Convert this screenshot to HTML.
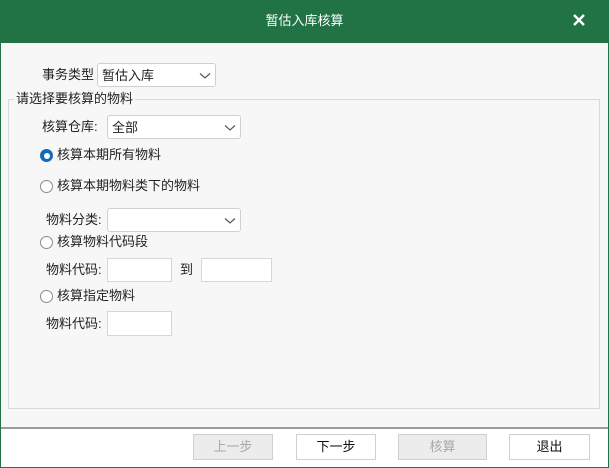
<!DOCTYPE html>
<html><head><meta charset="utf-8"><style>
*{margin:0;padding:0;box-sizing:border-box}
body{width:609px;height:468px;overflow:hidden;font-family:"Liberation Sans","Noto Sans CJK SC",sans-serif;font-size:13px;color:#222;background:#f7f7f7;position:relative}
.win{position:absolute;left:0;top:0;width:609px;height:468px;border:1px solid #217346;background:#f7f7f7}
.title{position:absolute;left:0;top:0;width:609px;height:43px;background:#217346;color:#fff;text-align:center;line-height:41px;font-size:13px}
.x{position:absolute;left:571px;top:12px;width:16px;height:16px}
.a{position:absolute;white-space:nowrap;line-height:16px}
.sel,.inp{position:absolute;background:#fff;border:1px solid #cfcfcf;border-radius:3px}
.inp{border-radius:0;border-color:#d6d6d6}
.sel span{position:absolute;left:4px;top:4px;line-height:16px}
.sel svg{position:absolute;right:4px;top:8px}
.grp{position:absolute;left:8px;top:99px;width:592px;height:310px;border:1px solid #d9d9d9}
.gl{position:absolute;left:14px;top:91px;background:#f7f7f7;padding:0 2px;line-height:16px}
.r{position:absolute;width:13px;height:13px;border-radius:50%;border:1px solid #8a8a8a;background:#fff}
.r.on{border:none;background:#0f6cbd}
.r.on::after{content:"";position:absolute;left:3.5px;top:3.5px;width:6px;height:6px;border-radius:50%;background:#fff}
.bot{position:absolute;left:1px;top:427px;width:607px;height:40px;background:#fff;border-top:2px solid #9a9a9a}
.btn{position:absolute;top:434px;height:26px;border:1px solid #d0d0d0;background:#fff;text-align:center;line-height:24px;color:#111}
.btn.dis{background:#ececec;color:#a8a8a8}
</style></head><body>
<div class="win"></div>
<div class="title">暂估入库核算</div>
<svg class="x" viewBox="0 0 16 16"><path d="M3 3L13 13M13 3L3 13" stroke="#fff" stroke-width="2.4"/></svg>

<div class="a" style="left:42px;top:67px">事务类型</div>
<div class="sel" style="left:97px;top:63px;width:119px;height:24px"><span>暂估入库</span><svg width="12" height="8" viewBox="0 0 12 8"><path d="M1 1.5L6 6L11 1.5" stroke="#555" fill="none" stroke-width="1.2"/></svg></div>

<div class="grp"></div>
<div class="gl">请选择要核算的物料</div>

<div class="a" style="left:42px;top:119px">核算仓库:</div>
<div class="sel" style="left:107px;top:115px;width:134px;height:24px"><span>全部</span><svg width="12" height="8" viewBox="0 0 12 8"><path d="M1 1.5L6 6L11 1.5" stroke="#555" fill="none" stroke-width="1.2"/></svg></div>

<div class="r on" style="left:40px;top:149px"></div>
<div class="a" style="left:57px;top:147px">核算本期所有物料</div>
<div class="r" style="left:40px;top:180px"></div>
<div class="a" style="left:57px;top:178px">核算本期物料类下的物料</div>

<div class="a" style="left:46px;top:212px">物料分类:</div>
<div class="sel" style="left:107px;top:208px;width:134px;height:24px"><svg width="12" height="8" viewBox="0 0 12 8"><path d="M1 1.5L6 6L11 1.5" stroke="#555" fill="none" stroke-width="1.2"/></svg></div>

<div class="r" style="left:40px;top:236px"></div>
<div class="a" style="left:57px;top:234px">核算物料代码段</div>
<div class="a" style="left:46px;top:262px">物料代码:</div>
<div class="inp" style="left:107px;top:258px;width:65px;height:24px"></div>
<div class="a" style="left:180px;top:262px">到</div>
<div class="inp" style="left:201px;top:258px;width:71px;height:24px"></div>

<div class="r" style="left:40px;top:290px"></div>
<div class="a" style="left:57px;top:288px">核算指定物料</div>
<div class="a" style="left:46px;top:316px">物料代码:</div>
<div class="inp" style="left:107px;top:311px;width:65px;height:25px"></div>

<div class="bot"></div>
<div class="btn dis" style="left:193px;width:80px">上一步</div>
<div class="btn" style="left:296px;width:80px">下一步</div>
<div class="btn dis" style="left:398px;width:89px">核算</div>
<div class="btn" style="left:509px;width:81px">退出</div>
</body></html>
